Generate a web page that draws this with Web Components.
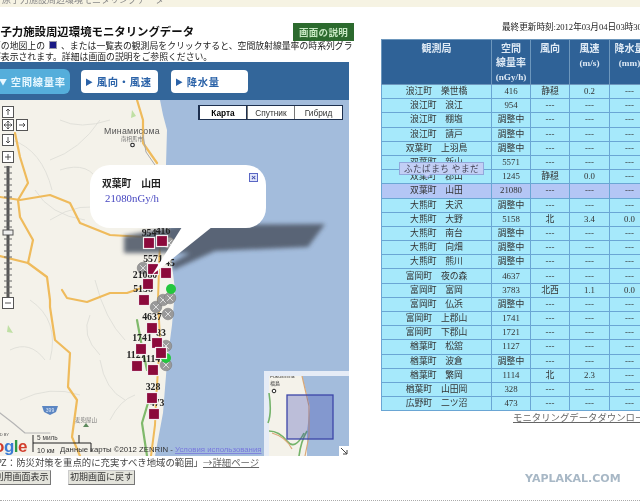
<!DOCTYPE html>
<html lang="ja"><head><meta charset="utf-8"><title>環境モニタリングデータ</title>
<style>
html,body{margin:0;padding:0;background:#fff}
body{font-family:"Liberation Serif","Noto Sans CJK JP",serif}
</style></head><body>
<x-app></x-app>
<script>
const JP='"Noto Sans CJK JP",sans-serif';
class Base extends HTMLElement{
  constructor(){super();this.attachShadow({mode:'open'});this.shadowRoot.innerHTML=this.render();}
}
customElements.define('x-topbar',class extends Base{render(){return `<style>
:host{display:block;height:7px;background:#f6f3e3;overflow:hidden;font:9px ${JP};color:#888;line-height:7px;white-space:nowrap}
span{display:block;margin-top:-4px;padding-left:2px}
</style><span>原子力施設周辺環境モニタリングデータ</span>`}});

customElements.define('x-tabs',class extends Base{render(){return `<style>
:host{display:flex;width:349px;height:38px;background:#33669a;align-items:center;gap:11px;font:bold 10.3px ${JP};letter-spacing:.7px;box-sizing:border-box}
div{height:23px;border-radius:4px;background:#fff;color:#2a62a8;width:77px;box-sizing:border-box;display:flex;align-items:center;padding-left:4px;white-space:nowrap}
.a{background:#55aedb;color:#e8f8ff;width:78px;height:25px;margin-left:-8px;padding-left:7px;border-radius:6px}
.t3{margin-left:2px}
b{font-size:8px;margin-right:3px;font-weight:normal}
</style><div class="a"><b>▼</b>空間線量率</div><div><b>▶</b>風向・風速</div><div class="t3"><b>▶</b>降水量</div>`}});

customElements.define('x-maptype',class extends Base{render(){return `<style>
:host{position:absolute;right:6px;top:5px;display:flex;font:8.3px "Liberation Sans",sans-serif;color:#333;background:#fff;border:1px solid #1d2f4e;box-sizing:border-box;height:15px}
div{display:flex;align-items:center;justify-content:center;border-left:1px solid #777}
.k{width:46px;font-weight:bold;border-left:0;color:#000;border:1px solid #1d2f4e;margin:-1px 0}
</style><div class="k">Карта</div><div style="width:46px">Спутник</div><div style="width:47px">Гибрид</div>`}});

customElements.define('x-bubble',class extends Base{render(){return `<style>
:host{position:absolute;left:90px;top:65px;width:176px;height:63px;box-sizing:border-box;background:#fff;border-radius:20px;padding:11px 12px;font:bold 9.8px/14px ${JP};color:#222}
p{margin:1px 0 0 3px;font:normal 10.8px/14px "Liberation Serif",serif;color:#4646c0}
i{position:absolute;right:8px;top:8px;width:7px;height:7px;border:1px solid #5a66c4;background:#dfe4fa;color:#3a46a8;font:bold 8px/7px "Liberation Sans",sans-serif;text-align:center}
</style><div>双葉町　山田</div><p>21080nGy/h</p><i>×</i>`}});

customElements.define('x-map',class extends Base{render(){
  const sq=[[149,243],[162,241],[153,269],[166,273],[148,284],[144,300],[152,328],[157,343],[141,349],[161,353],[137,366],[153,370],[152,398],[154,414]];
  const gr=[[169,243],[143,268],[156,307],[163,300],[170,298],[168,314],[166,346],[166,365]];
  const lb=[[149,236,'954'],[163,234,'416'],[153,262,'5571'],[170,266,'45'],[145,278,'21080'],[143,292,'5158'],[152,320,'4637'],[161,336,'83'],[142,341,'1741'],[136,358,'1127'],[151,362,'1114'],[153,390,'328'],[157,406,'473']];
  const Y=100;
  const P=a=>a.map(p=>p[0]+','+(p[1]-Y)).join(' ');
  const road=(a,c='#efbb5c',w=2.2)=>`<polyline points="${P(a)}" fill="none" stroke="${c}" stroke-width="${w}" stroke-linejoin="round" stroke-linecap="round"/>`;
  const btn=(x,y,g)=>`<g transform="translate(${x-6},${y-Y-6})"><rect x=".5" y=".5" width="11" height="11" fill="#fff" stroke="#555"/><path d="${g}" fill="none" stroke="#444" stroke-width=".9"/></g>`;
  let ticks='';for(let y=167;y<298;y+=6)ticks+=`<path d="M4 ${y-Y}h8" stroke="#666" stroke-width="1"/>`;
  return `<style>:host{display:block;position:relative;width:349px;height:356px;overflow:hidden;background:#a3bcdc}
svg{display:block}
</style>
<svg width="349" height="356" viewBox="0 0 349 356" font-family="Liberation Serif,serif">
<defs><filter id="c" x="-20%" y="-60%" width="140%" height="220%"><feGaussianBlur stdDeviation="2.2"/></filter></defs>
<polygon points="0,0 160,0 163,15 167,30 166,65 170,120 172,165 175,190 172,225 167,263 163,313 155,356 0,356" fill="#f4f2ea"/>
<path d="M12 40q30 10 40 50M100 20q-20 30-50 40M110 110q-30-10-60 10M30 200q30 20 20 60M95 180q10 40 30 60M20 300q30-15 60-5M100 260q5 30 25 40M60 20q20 10 50 0M35 90q15 25 50 30M10 250q20-10 35 10M90 215q-10 20 10 40M110 320q10-20 25-25M60 70q30-10 40 15" fill="none" stroke="#dcdcd6" stroke-width=".8"/>
${road([[15,133],[20,157],[28,183],[18,200],[20,217],[33,240],[28,263],[47,277],[50,300],[50,307],[55,340],[70,353],[68,387],[77,400],[72,437],[80,456]])}
${road([[0,197],[20,200],[50,195],[70,203],[80,223],[110,235],[143,237]])}
${road([[137,100],[143,120],[143,143],[157,163]])}
${road([[62,290],[67,298],[87,302],[110,293],[127,293],[147,286]])}
${road([[28,263],[0,256]])}
${road([[160,240],[158,300],[160,340],[156,400],[155,425],[151,456]],'#efbb5c',2)}
${road([[137,320],[142,347],[147,370]],'#7fb96b',2.2)}
${road([[148,403],[142,423],[147,456]],'#7fb96b',2.2)}
${road([[143,135],[146,152],[155,165]],'#a9a9a9',1)}
${road([[0,413],[13,423],[25,433],[50,433]],'#b5b5b5',1.2)}
<path d="M126 118l5 7-6 1zM132 10l4 6-5 2zM8 225l5 8-6-1z" fill="#bfe0a4"/>
<text x="132" y="33.500" text-anchor="middle" font-family="Liberation Sans,sans-serif" font-size="8.800" fill="#555" letter-spacing=".25">Минамисома</text>
<text x="132" y="41" text-anchor="middle" font-family="Noto Sans CJK JP,sans-serif" font-size="5.500" fill="#777">南相馬市</text>
<circle cx="132.500" cy="45" r="1.800" fill="#fff" stroke="#222" stroke-width="1.100"/>
<text x="86" y="322" text-anchor="middle" font-family="Noto Sans CJK JP,sans-serif" font-size="5.500" fill="#777">麦兜屋山</text><path d="M86 323l3 4h-6z" fill="#5d8a5d"/>
<path d="M42 306h16l-2 6-6 3-6-3z" fill="#5b86c2"/><text x="50" y="312" text-anchor="middle" font-family="Liberation Sans,sans-serif" font-size="5" fill="#dde8f8">399</text>
<g filter="url(#c)" fill="#4f5868" opacity=".88"><polygon points="182,125 325,124 308,147 215,151 173,170 172,163 190,153 124,153 124,136"/></g>
${gr.map(g=>`<g transform="translate(${g[0]},${g[1]-Y})"><circle r="5.800" fill="#999" stroke="#777" stroke-width=".5"/><path d="M-2.800-2.800l5.600 5.600m0-5.600l-5.600 5.600" stroke="#dedede" stroke-width="1"/></g>`).join('')}
${[[171,289],[166,358]].map(g=>`<circle cx="${g[0]}" cy="${g[1]-Y}" r="5" fill="#23c63e"/>`).join('')}
${lb.map(l=>`<text x="${l[0]}" y="${l[1]-Y}" text-anchor="middle" font-size="9.800" font-weight="bold" fill="#222">${l[2]}</text>`).join('')}
${sq.map(s=>`<rect x="${s[0]-5.5}" y="${s[1]-Y-5.5}" width="11" height="11" fill="#8c0a3c" stroke="#f4eef0" stroke-width="1.200"/>`).join('')}
<polygon points="182,127 212,127 152,175" fill="#fff"/>
${btn(8,112,'M6 3v6M4 5l2-2 2 2')}${btn(8,125,'M6 2v8M2 6h8M6 2l-1.500 1.500M6 2l1.500 1.500M6 10l-1.500-1.500M6 10l1.500-1.500M2 6l1.500-1.500M2 6l1.500 1.500M10 6l-1.500-1.500M10 6l-1.500 1.500')}${btn(22,125,'M3 6h6M7 4l2 2-2 2')}${btn(8,140,'M6 3v6M4 7l2 2 2-2')}
${btn(8,157,'M3 6h6M6 3v6')}
<path d="M8 66V197" stroke="#555" stroke-width="3"/>${ticks}
<rect x="3" y="130" width="10" height="5" fill="#eee" stroke="#555"/>
${btn(8,303,'M3 6h6')}
<text x="-6" y="352" font-family="Liberation Sans,sans-serif" font-size="17" font-weight="bold" letter-spacing="-.5"><tspan fill="#d23d2c">o</tspan><tspan fill="#3a7bd5">g</tspan><tspan fill="#2d9a45">l</tspan><tspan fill="#d23d2c">e</tspan></text>
<text x="-3" y="336" font-family="Liberation Sans,sans-serif" font-size="4" fill="#555">ED BY</text>
<path d="M33 352V335M33 343H91V352M79 343V335" stroke="#222" stroke-width="1" fill="none"/>
<text x="37" y="340" font-family="Liberation Sans,sans-serif" font-size="6.500" fill="#444">5 миль</text>
<text x="37" y="353" font-family="Liberation Sans,sans-serif" font-size="7" fill="#333">10 км</text>
<text x="60" y="352" font-family="Liberation Sans,sans-serif" font-size="7.800" fill="#333">Данные карты ©2012 ZENRIN - <tspan fill="#7777dd" text-decoration="underline">Условия использования</tspan></text>
<g transform="translate(264,271)">
<rect width="85" height="85" fill="#e6ecf6"/>
<rect x="5" y="5" width="80" height="80" fill="#a3bcdc"/>
<polygon points="5,5 38,5 46,36 43,60 43,85 5,85" fill="#f4f2ea"/>
<path d="M5 60q10 0 18 10t17-8M5 22q3 20-1 30M35 85q2-15 8-25" stroke="#74b36a" stroke-width="1.600" fill="none"/>
<path d="M8 62q14 4 20 16M38 5l7 30v30l-4 20" stroke="#d9a878" stroke-width="1.200" fill="none"/>
<text x="6" y="7" font-family="Liberation Sans,sans-serif" font-size="5" fill="#444">Fukushima</text><text x="6" y="14" font-family="Noto Sans CJK JP,sans-serif" font-size="5" fill="#444">福島</text>
<rect y="0" width="85" height="5" fill="#e6ecf6"/>
<circle cx="10" cy="20" r="1.800" fill="#fff" stroke="#222"/>
<rect x="23" y="24" width="46" height="44" fill="#3c46b4" fill-opacity=".3" stroke="#3c46a8" stroke-width="1.300"/>
<rect x="75" y="75" width="10" height="10" fill="#fff"/><path d="M77 77l6 6m0-4v4h-4" stroke="#444" fill="none"/>
</g>
</svg>
<x-maptype></x-maptype><x-bubble></x-bubble>`}});

customElements.define('x-left',class extends Base{render(){return `<style>
:host{display:block;width:356px;flex:none;overflow:hidden;font-family:${JP};color:#222}
.head{height:15px;display:flex;align-items:center;justify-content:space-between;margin-top:17px}
h1{margin:0 0 0 -11px;font-size:11.4px;font-weight:bold;white-space:nowrap;color:#111;line-height:15px}
.help{width:61px;height:18px;background:#2c6a2e;color:#c7e8c3;font-size:9.500px;font-weight:bold;display:flex;align-items:center;justify-content:center;margin-right:2px;letter-spacing:.3px;flex:none}
.txt{font-size:8.85px;line-height:10.600px;height:21px;margin:2px 0 0 -8px;white-space:nowrap;color:#222}
.txt i{display:inline-block;width:6px;height:6px;background:#1a1a86;border:1px solid #99a;margin:0 2px;outline:1px solid #fff}
.cap{font-size:9.400px;margin:1px 0 0 -4px;white-space:nowrap;color:#444;line-height:11px}
.cap u{color:#666}
.btns{display:flex;gap:17px;margin:2px 0 0 -8px;font-size:9px}
.btns div{background:#e4e4dc;border:1px solid #ccc;border-right-color:#777;border-bottom-color:#777;height:13px;line-height:12px;box-sizing:content-box;white-space:nowrap;width:57px;text-align:center;color:#333}
.btns div+div{width:65px}
</style>
<div class="head"><h1>原子力施設周辺環境モニタリングデータ</h1><div class="help">画面の説明</div></div>
<div class="txt">面の地図上の <i></i> 、または一覧表の観測局をクリックすると、空間放射線量率の時系列グラ<br>が表示されます。詳細は画面の説明をご参照ください。</div>
<x-tabs></x-tabs><x-map></x-map>
<div class="cap">PZ：防災対策を重点的に充実すべき地域の範囲」<u>→詳細ページ</u></div>
<div class="btns"><div>利用画面表示</div><div>初期画面に戻す</div></div>`}});

customElements.define('x-table',class extends Base{render(){
 const r=[['浪江町　樂世橋','416','静穏','0.2','---'],['浪江町　浪江','954'],['浪江町　棚塩','調整中'],['浪江町　請戸','調整中'],['双葉町　上羽鳥','調整中'],['双葉町　新山','5571'],['双葉町　郡山','1245','静穏','0.0','---'],['双葉町　山田','21080'],['大熊町　夫沢','調整中'],['大熊町　大野','5158','北','3.4','0.0'],['大熊町　南台','調整中'],['大熊町　向畑','調整中'],['大熊町　熊川','調整中'],['富岡町　夜の森','4637'],['富岡町　富岡','3783','北西','1.1','0.0'],['富岡町　仏浜','調整中'],['富岡町　上郡山','1741'],['富岡町　下郡山','1721'],['楢葉町　松舘','1127'],['楢葉町　波倉','調整中'],['楢葉町　繁岡','1114','北','2.3','---'],['楢葉町　山田岡','328'],['広野町　二ツ沼','473']];
 const rows=r.map((a,i)=>`<tr class="${i==7?'s':''}">${[0,1,2,3,4].map(k=>`<td>${a[k]||'---'}</td>`).join('')}</tr>`).join('');
 return `<style>
:host{display:block;font-family:"Liberation Serif","Noto Sans CJK JP",serif}
table{border-collapse:collapse;table-layout:fixed;width:268px;border:1px solid #5f9fd0}
th{background:#2f6297;color:#dfeaf5;font-size:10px;font-weight:bold;vertical-align:top;border:1px solid #6d97bd;height:42px;padding:2px 0 0;line-height:14px}
th span{font-size:9.200px}
td{background:#a6e9fb;color:#333;font-size:8.800px;text-align:center;border:1px solid #6aa6d4;height:13.200px;padding:0;line-height:13px;white-space:nowrap}
tr.s td{background:#b4c6f5}
</style><table><colgroup><col style="width:110px"><col style="width:39px"><col style="width:39px"><col style="width:40px"><col style="width:40px"></colgroup>
<tr><th>観測局</th><th>空間<br>線量率<br><span>(nGy/h)</span></th><th>風向</th><th>風速<br><span>(m/s)</span></th><th>降水量<br><span>(mm)</span></th></tr>${rows}</table>`}});

customElements.define('x-tip',class extends Base{render(){return `<style>
:host{position:absolute;left:18px;top:155px;height:11px;width:83px;background:#c2cff5;border:1px solid #93a8dc;font:8.600px/11px ${JP};color:#445;text-align:center;letter-spacing:.5px;white-space:nowrap}
i{position:absolute;left:24px;top:9px;width:5px;height:5px;background:#c2cff5;border-right:1px solid #93a8dc;border-bottom:1px solid #93a8dc;transform:rotate(45deg) scale(.8)}
</style>ふたばまち やまだ<i></i>`}});

customElements.define('x-right',class extends Base{render(){return `<style>
:host{display:block;width:259px;flex:none;overflow:hidden;position:relative;margin-left:25px}
.up{font:8.600px "Liberation Serif","Noto Sans CJK JP",serif;color:#222;white-space:nowrap;margin:13px 0 5px 121px;line-height:14px;height:14px}
.dl{font:9.400px/12px ${JP};color:#666;text-decoration:underline;white-space:nowrap;margin:0 0 0 132px}
.wm{font:bold 11px "DejaVu Sans",sans-serif;color:#a8b8c6;margin:50px 0 0 144px;white-space:nowrap;line-height:12px}
</style><div class="up">最終更新時刻:2012年03月04日03時30分</div><x-table></x-table><div class="dl">モニタリングデータダウンロード</div><div class="wm">YAPLAKAL.COM</div><x-tip></x-tip>`}});

customElements.define('x-app',class extends Base{render(){return `<style>
:host{display:block;width:640px;height:501px;overflow:hidden;position:relative;filter:blur(.35px);background:#fff}
.m{display:flex;height:493px}
.line{height:0;border-top:1px dotted #aaa}
</style><x-topbar></x-topbar><div class="m"><x-left></x-left><x-right></x-right></div><div class="line"></div>`}});
</script></body></html>
